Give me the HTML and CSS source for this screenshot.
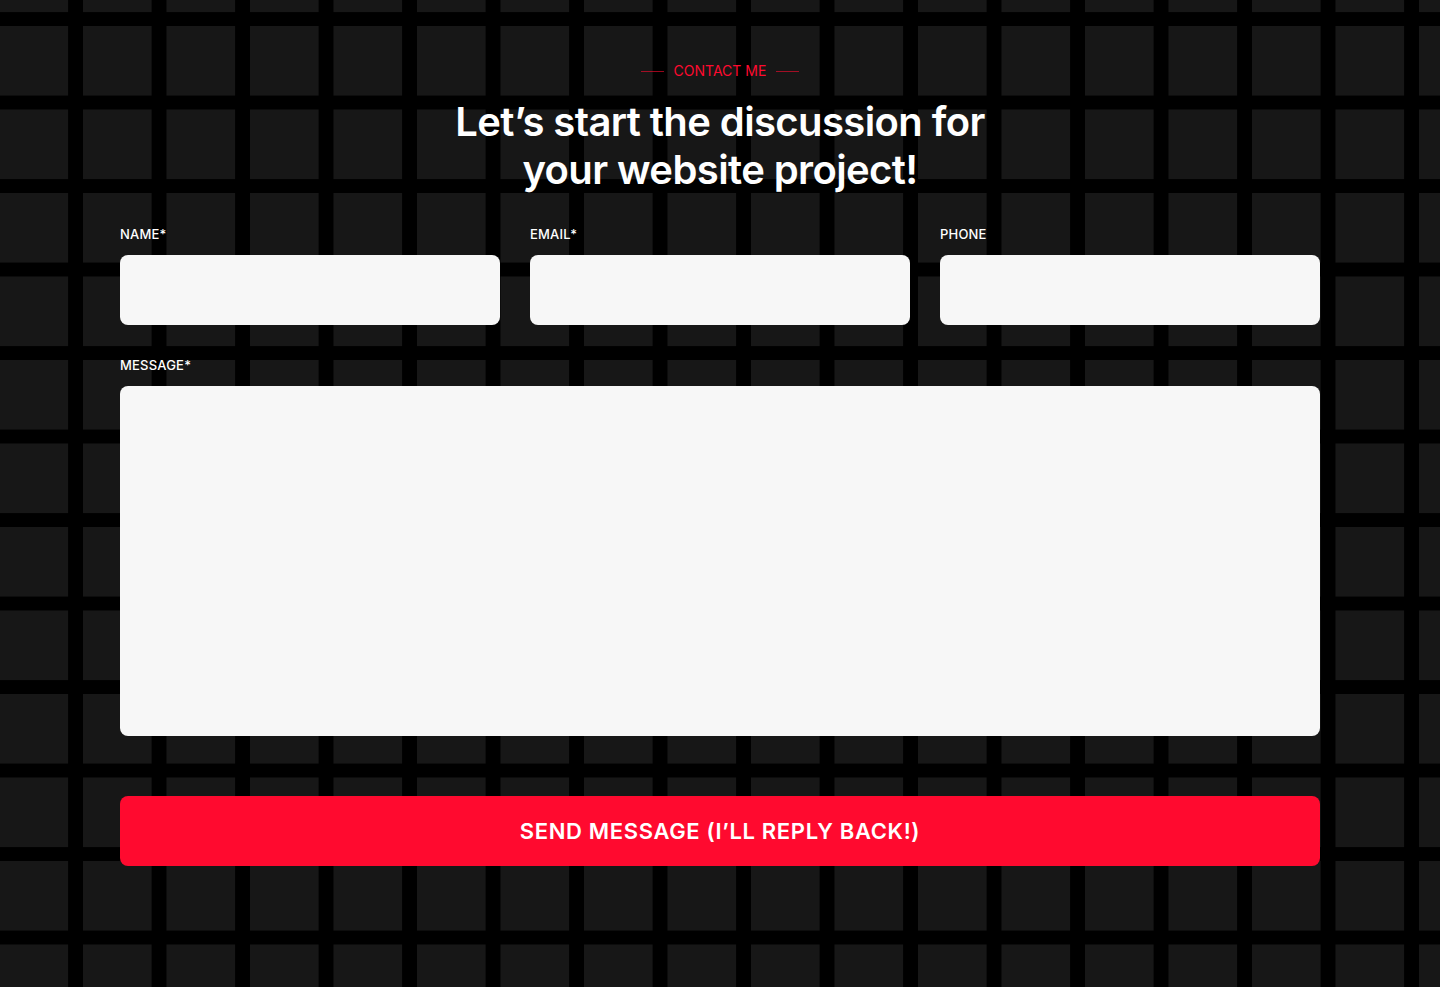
FILE: index.html
```html
<!DOCTYPE html>
<html lang="en">
<head>
    <meta charset="UTF-8">
    <meta name="viewport" content="width=device-width, initial-scale=1.0">
    <title>Contact Me</title>
    <link rel="stylesheet" href="styles.css">
</head>
<body>
    <section class="contact">
        <div class="eyebrow">
            <span class="eyebrow-line"></span>
            <span class="eyebrow-text">CONTACT ME</span>
            <span class="eyebrow-line"></span>
        </div>

        <h1>Let’s start the discussion for<br>your website project!</h1>

        <form class="contact-form">
            <div class="form-row">
                <div class="field">
                    <label for="name">NAME*</label>
                    <input type="text" id="name">
                </div>
                <div class="field">
                    <label for="email">EMAIL*</label>
                    <input type="email" id="email">
                </div>
                <div class="field">
                    <label for="phone">PHONE</label>
                    <input type="tel" id="phone">
                </div>
            </div>

            <div class="field">
                <label for="message">MESSAGE*</label>
                <textarea id="message"></textarea>
            </div>

            <button type="button" class="send-btn">SEND MESSAGE (I’LL REPLY BACK!)</button>
        </form>
    </section>
</body>
</html>
```

FILE: styles.css
```css
* {
    margin: 0;
    padding: 0;
    box-sizing: border-box;
}

/* dark tiles on a black grid */
body {
    font-family: 'Inter', 'Noto Sans', sans-serif;
    color: #fff;
    min-height: 100vh;
    background-color: #171717;
    background-image:
        linear-gradient(to right, transparent 69px, #000 69px),
        linear-gradient(to bottom, transparent 70px, #000 70px);
    background-size: 83.5px 83.5px;
    background-position: -0.5px 26px;
}

.contact {
    width: 1200px;
    margin: 0 auto;
    padding: 61px 0 120px;
}

.eyebrow {
    display: flex;
    align-items: center;
    justify-content: center;
    gap: 10px;
    height: 20px;
}

.eyebrow-line {
    width: 23px;
    height: 1px;
    background: #ff0a2f;
    opacity: 0.6;
}

.eyebrow-text {
    color: #ff0a2f;
    font-size: 14px;
    font-weight: 400;
    line-height: 20px;
}

h1 {
    margin-top: 17px;
    text-align: center;
    font-size: 40px;
    line-height: 48px;
    font-weight: 600;
    letter-spacing: -0.6px;
}

.contact-form {
    margin-top: 30px;
}

.form-row {
    display: grid;
    grid-template-columns: repeat(3, 1fr);
    gap: 30px;
    margin-bottom: 30px;
}

.field {
    display: flex;
    flex-direction: column;
}

.field label {
    font-size: 13px;
    font-weight: 500;
    line-height: 20px;
    letter-spacing: 0.2px;
    margin-bottom: 11px;
}

.field input,
.field textarea {
    background: #f7f7f7;
    border: none;
    border-radius: 8px;
    font-family: inherit;
    font-size: 15px;
    padding: 0 20px;
    outline: none;
}

.field input {
    height: 70px;
}

.field textarea {
    height: 350px;
    padding: 20px;
    resize: none;
}

.send-btn {
    display: block;
    width: 100%;
    height: 70px;
    margin-top: 60px;
    background: #ff0a2f;
    color: #fff;
    border: none;
    border-radius: 8px;
    font-family: inherit;
    font-size: 22px;
    font-weight: 600;
    letter-spacing: 0.65px;
    cursor: pointer;
}
```
